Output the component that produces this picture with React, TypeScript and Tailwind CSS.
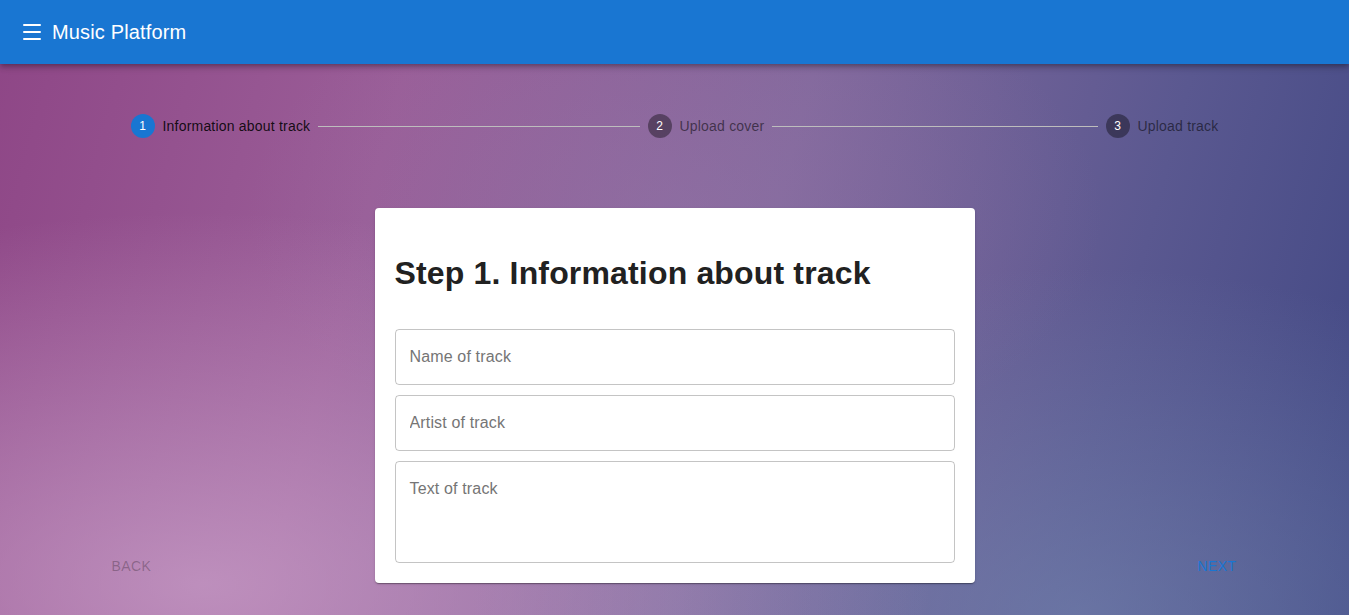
import { Menu } from "lucide-react";

const STEPS = ["Information about track", "Upload cover", "Upload track"];

function Step({ index, label, active }: { index: number; label: string; active: boolean }) {
  return (
    <div className="flex items-center px-2">
      <span
        className={[
          "flex h-6 w-6 items-center justify-center rounded-full text-xs text-white",
          active ? "bg-[#1976d2]" : "bg-black/[0.38]",
        ].join(" ")}
      >
        {index}
      </span>
      <span
        className={[
          "pl-2 text-sm tracking-[0.2px]",
          active ? "text-black/[0.87]" : "text-black/[0.54]",
        ].join(" ")}
      >
        {label}
      </span>
    </div>
  );
}

export default function App() {
  return (
    <div className="flex min-h-screen flex-col font-['Liberation_Sans',Arial,sans-serif] bg-[radial-gradient(ellipse_at_15%_95%,rgba(205,165,205,0.7)_0%,rgba(205,165,205,0)_45%),radial-gradient(ellipse_at_80%_100%,rgba(120,140,180,0.55)_0%,rgba(120,140,180,0)_40%),radial-gradient(ellipse_at_50%_35%,rgba(150,120,170,0.4)_0%,rgba(150,120,170,0)_45%),linear-gradient(105deg,#8e4686_0%,#9a5e98_28%,#82689c_55%,#5a5890_80%,#414884_100%)]">
      <header className="relative z-10 flex h-16 items-center bg-[#1976d2] pl-5 text-white shadow-[0_2px_4px_-1px_rgba(0,0,0,0.2),0_4px_5px_0_rgba(0,0,0,0.14),0_1px_10px_0_rgba(0,0,0,0.12)]">
        <Menu size={24} strokeWidth={2} className="text-white" />
        <h1 className="ml-2 text-xl tracking-[0.15px]">Music Platform</h1>
      </header>

      <main className="mx-auto w-full max-w-[1200px] px-6">
        {/* Stepper */}
        <div className="flex items-center px-6 pt-[50px]">
          {STEPS.map((label, i) => (
            <div key={label} className={i === 0 ? "flex items-center" : "flex flex-1 items-center"}>
              {i > 0 && <div className="flex-1 border-t border-[#bdbdbd]" />}
              <Step index={i + 1} label={label} active={i === 0} />
            </div>
          ))}
        </div>

        {/* Content */}
        <div className="mt-[70px] grid grid-cols-[1fr_600px_1fr] items-end">
          <button
            disabled
            className="mb-[-1px] ml-[5px] h-9 justify-self-start px-2 text-sm uppercase tracking-[0.4px] text-black/[0.26]"
          >
            Back
          </button>

          <div className="rounded bg-white p-5 shadow-[0_2px_1px_-1px_rgba(0,0,0,0.2),0_1px_1px_0_rgba(0,0,0,0.14),0_1px_3px_0_rgba(0,0,0,0.12)]">
            <h2 className="mt-[27px] text-[32px] font-bold leading-[37px] tracking-[0.16px] text-[#212121]">
              Step 1. Information about track
            </h2>
            <div className="mt-[37px] flex flex-col gap-2.5">
              <input
                placeholder="Name of track"
                className="h-14 rounded border border-black/[0.23] px-3.5 text-base tracking-[0.15px] placeholder:text-[#757575]"
              />
              <input
                placeholder="Artist of track"
                className="h-14 rounded border border-black/[0.23] px-3.5 text-base tracking-[0.15px] placeholder:text-[#757575]"
              />
              <textarea
                placeholder="Text of track"
                className="h-[102px] resize-none rounded border border-black/[0.23] px-3.5 pt-[17px] text-base leading-[19px] tracking-[0.15px] placeholder:text-[#757575]"
              />
            </div>
          </div>

          <button className="mb-[-1px] mr-[6px] h-9 justify-self-end px-2 text-sm uppercase tracking-[0.4px] text-[#1976d2]">
            Next
          </button>
        </div>
      </main>
    </div>
  );
}
